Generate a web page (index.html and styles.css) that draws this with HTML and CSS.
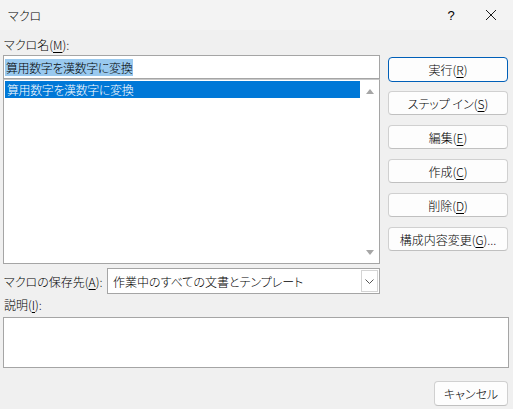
FILE: index.html
```html
<!DOCTYPE html>
<html lang="ja">
<head>
<meta charset="utf-8">
<link rel="stylesheet" href="styles.css">
</head>
<body>
<div class="dialog">
  <div class="titlebar">
    <span class="title">マクロ</span>
    <span class="help">?</span>
    <span class="close"><svg width="12" height="12" viewBox="0 0 12 12"><path d="M1 1L11 11M11 1L1 11" stroke="#1a1a1a" stroke-width="1" fill="none"/></svg></span>
  </div>
  <div class="content">
    <div class="top">
      <div class="left">
        <div class="lbl">マクロ名(<u>M</u>):</div>
        <div class="input"><span class="sel">算用数字を漢数字に変換</span></div>
        <div class="listbox">
          <div class="items">
            <div class="item selected">算用数字を漢数字に変換</div>
          </div>
          <div class="scroll">
            <span class="arrow up"></span>
            <span class="arrow down"></span>
          </div>
        </div>
        <div class="combo-row">
          <div class="combo-lbl">マクロの保存先(<u>A</u>):</div>
          <div class="combo">
            <span class="combo-text">作業中のすべての文書とテンプレート</span>
            <span class="drop"><svg width="9" height="5" viewBox="0 0 9 5"><path d="M0.5 0.5L4.5 4.5L8.5 0.5" stroke="#555" stroke-width="1" fill="none"/></svg></span>
          </div>
        </div>
      </div>
      <div class="buttons">
        <div class="btn default">実行(<u>R</u>)</div>
        <div class="btn">ステップ イン(<u>S</u>)</div>
        <div class="btn">編集(<u>E</u>)</div>
        <div class="btn">作成(<u>C</u>)</div>
        <div class="btn">削除(<u>D</u>)</div>
        <div class="btn">構成内容変更(<u>G</u>)...</div>
      </div>
    </div>
    <div class="lbl desc-lbl">説明(<u>I</u>):</div>
    <div class="desc"></div>
    <div class="footer">
      <div class="btn cancel">キャンセル</div>
    </div>
  </div>
</div>
</body>
</html>
```

FILE: styles.css
```css
html, body {
  margin: 0;
  padding: 0;
  background: #f0f0f0;
}
body {
  font-family: "Noto Sans CJK JP", "Noto Sans", sans-serif;
  font-size: 12px;
  font-weight: 300;
  color: #000;
  font-feature-settings: "palt";
}
u { text-decoration-thickness: 1px; text-underline-offset: 2px; }
.dialog {
  width: 513px;
  height: 409px;
  background: #f0f0f0;
  overflow: hidden;
}
.titlebar {
  height: 30px;
  display: flex;
  align-items: center;
  background: #f3f3f3;
}
.title {
  padding-left: 8px;
  flex: 1;
  font-size: 12px;
}
.help {
  width: 20px;
  text-align: center;
  margin-right: 24px;
  font-family: "Liberation Sans", sans-serif;
  font-size: 13px;
}
.close {
  width: 12px;
  height: 12px;
  margin-right: 16px;
  display: flex;
}
.content {
  padding: 5px 4px 0 3px;
}
.top {
  display: flex;
}
.left {
  width: 377px;
}
.lbl {
  height: 20px;
  line-height: 20px;
  padding-left: 1px;
}
.input {
  height: 24px;
  box-sizing: border-box;
  border: 1px solid #a5a5a5;
  background: #fff;
  display: flex;
  align-items: center;
  padding-left: 1px;
}
.sel {
  background: #99c9ef;
  line-height: 17px;
  padding: 0 1px;
  letter-spacing: -0.4px;
}
.listbox {
  height: 185px;
  box-sizing: border-box;
  border: 1px solid #a5a5a5;
  border-top-color: #c8c8c8;
  background: #fff;
  display: flex;
}
.items {
  flex: 1;
  padding: 1px;
}
.item {
  height: 17px;
  line-height: 17px;
  padding-left: 2px;
  letter-spacing: -0.4px;
}
.item.selected {
  background: #0078d7;
  color: #fff;
}
.scroll {
  width: 18px;
  display: flex;
  flex-direction: column;
  justify-content: space-between;
  align-items: center;
  padding: 9px 0 8px;
}
.arrow {
  width: 0;
  height: 0;
  border-left: 4.5px solid transparent;
  border-right: 4.5px solid transparent;
}
.arrow.up { border-bottom: 5px solid #a6a6a6; }
.arrow.down { border-top: 5px solid #a6a6a6; }
.combo-row {
  margin-top: 4px;
  display: flex;
  align-items: center;
  height: 26px;
}
.combo-lbl {
  width: 103px;
  padding-left: 1px;
  flex-shrink: 0;
}
.combo {
  flex: 1;
  height: 26px;
  box-sizing: border-box;
  border: 1px solid #a5a5a5;
  background: #fff;
  display: flex;
  align-items: center;
}
.combo-text {
  flex: 1;
  padding-left: 5px;
}
.drop {
  width: 17px;
  height: 22px;
  box-sizing: border-box;
  border: 1px solid #d4d4d4;
  margin-right: 1px;
  display: flex;
  align-items: center;
  justify-content: center;
  background: #fff;
}
.buttons {
  margin-left: 8px;
  width: 120px;
  padding-top: 22px;
  display: flex;
  flex-direction: column;
  gap: 10px;
}
.btn {
  height: 24px;
  box-sizing: border-box;
  border: 1px solid #d0d0d0;
  border-bottom-color: #c0c0c0;
  border-radius: 4px;
  background: #fdfdfd;
  display: flex;
  align-items: center;
  justify-content: center;
}
.btn.default {
  border-color: #005fb8;
  height: 25px;
  margin-bottom: -1px;
}
.desc-lbl {
  margin-top: 1px;
}
.desc {
  margin-top: 2px;
  height: 51px;
  box-sizing: border-box;
  border: 1px solid #a5a5a5;
  background: #fff;
}
.footer {
  display: flex;
  justify-content: flex-end;
  margin-top: 13px;
  padding-right: 1px;
}
.btn.cancel {
  width: 74px;
  height: 25px;
}
```
